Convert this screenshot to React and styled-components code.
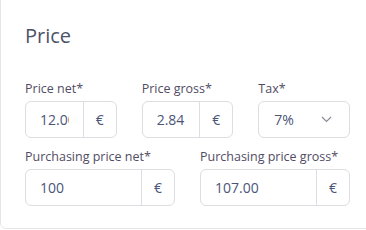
import React from "react";
import styled, { createGlobalStyle } from "styled-components";

const Global = createGlobalStyle`
  html, body {
    margin: 0;
    padding: 0;
    background: #ffffff;
  }
  body {
    font-family: "Open Sans", "Noto Sans", sans-serif;
  }
`;

const Page = styled.div`
  width: 366px;
  height: 230px;
  overflow: hidden;
`;

const Card = styled.div`
  box-sizing: border-box;
  width: 400px;
  margin-top: -10px;
  padding: 31px 24px 22px 24px;
  background: #ffffff;
  border: 1px solid #e6e6ea;
  border-radius: 6px;
`;

const Title = styled.h2`
  margin: 0 0 30px 0;
  font-size: 20px;
  line-height: 28px;
  font-weight: 400;
  color: #4c5268;
`;

const Grid = styled.div`
  display: grid;
  grid-template-columns: ${(p) => p.cols};
  column-gap: 25px;
  width: 325px;
  margin-bottom: ${(p) => p.mb || "0px"};
`;

const Field = styled.div`
  display: flex;
  flex-direction: column;
  min-width: 0;
`;

const Label = styled.label`
  font-size: 12.5px;
  line-height: 18px;
  color: #524c64;
  margin-bottom: 3px;
  white-space: nowrap;
`;

const Group = styled.div`
  box-sizing: border-box;
  display: flex;
  height: 37px;
  border: 1px solid #dddde2;
  border-radius: 6px;
  background: #fff;
  overflow: hidden;
`;

const Input = styled.input`
  flex: 1;
  min-width: 0;
  border: none;
  outline: none;
  padding: 0 14px;
  font-family: "Open Sans", "Noto Sans", sans-serif;
  font-size: 14px;
  color: #4b5578;
  background: transparent;
`;

const Addon = styled.span`
  box-sizing: border-box;
  flex: 0 0 33px;
  display: flex;
  align-items: center;
  justify-content: center;
  border-left: 1px solid #dddde2;
  font-size: 14px;
  color: #4b5578;
`;

const Select = styled.div`
  box-sizing: border-box;
  display: flex;
  align-items: center;
  justify-content: space-between;
  height: 37px;
  padding: 0 17px 0 15px;
  border: 1px solid #dddde2;
  border-radius: 6px;
  font-size: 14px;
  color: #4b5578;
`;

const Chevron = () => (
  <svg width="11" height="7" viewBox="0 0 11 7" fill="none">
    <path d="M1 1l4.5 4.5L10 1" stroke="#8a8d99" strokeWidth="1.2" />
  </svg>
);

const MoneyField = ({ label, value }) => (
  <Field>
    <Label>{label}</Label>
    <Group>
      <Input value={value} readOnly />
      <Addon>€</Addon>
    </Group>
  </Field>
);

export default function App() {
  return (
    <Page>
      <Global />
      <Card>
        <Title>Price</Title>
        <Grid cols="1fr 1fr 1fr" mb="10px">
          <MoneyField label="Price net*" value="12.00" />
          <MoneyField label="Price gross*" value="2.84" />
          <Field>
            <Label>Tax*</Label>
            <Select>
              <span>7%</span>
              <Chevron />
            </Select>
          </Field>
        </Grid>
        <Grid cols="1fr 1fr">
          <MoneyField label="Purchasing price net*" value="100" />
          <MoneyField label="Purchasing price gross*" value="107.00" />
        </Grid>
      </Card>
    </Page>
  );
}
